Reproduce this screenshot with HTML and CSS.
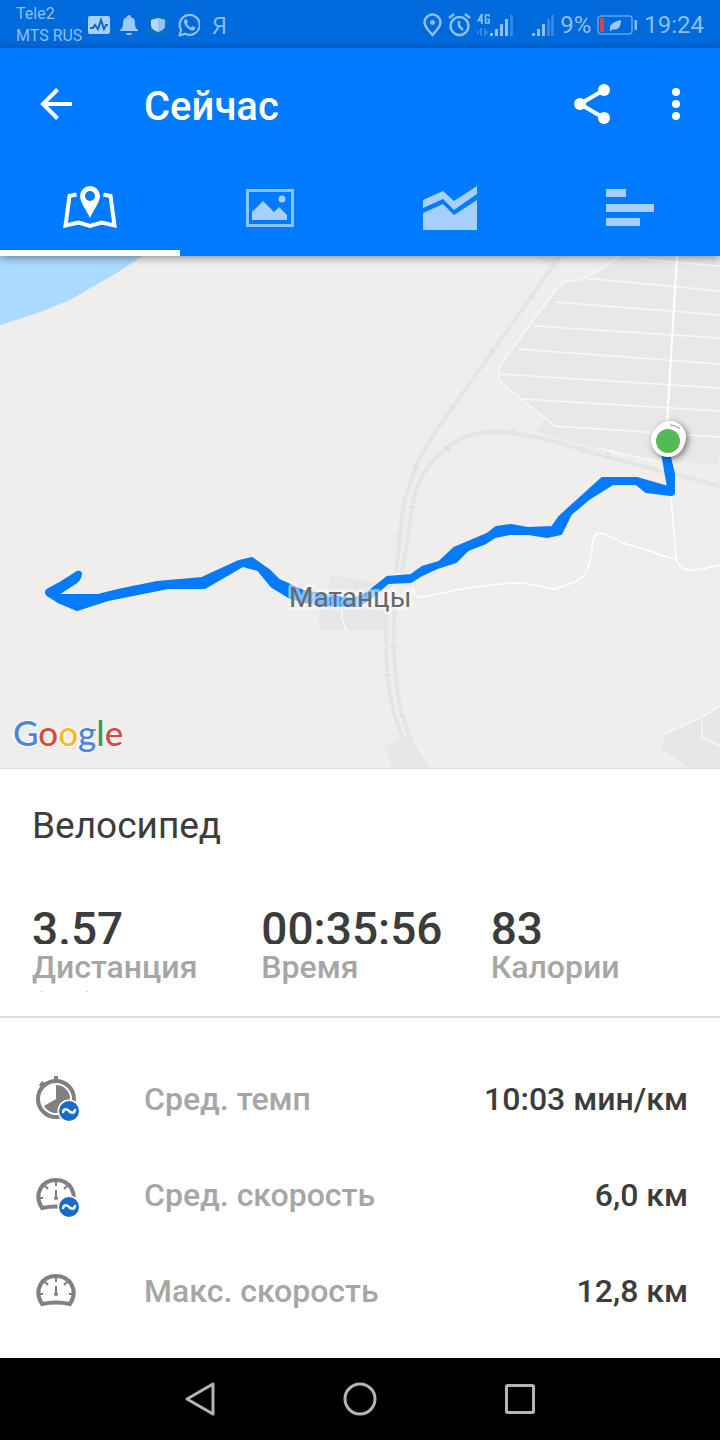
FILE: index.html
```html
<!DOCTYPE html>
<html lang="ru">
<head>
<meta charset="utf-8">
<meta name="viewport" content="width=device-width, initial-scale=1">
<title>Сейчас</title>
<link rel="stylesheet" href="styles.css">
</head>
<body>
<div class="status">
  <div class="status-group status-left">
    <div class="carriers"><span>Tele2</span><span>MTS RUS</span></div>
    <svg width="22" height="18" viewBox="0 0 22 18"><rect width="22" height="18" rx="2" fill="#a9d0f7"/><path d="M2 12h3l2-3 3 4 3-9 3 9 2-4h2" fill="none" stroke="#0a69d6" stroke-width="2"/></svg>
    <svg width="18" height="20" viewBox="0 0 18 20" fill="#9ccbf9"><path d="M9 0a2 2 0 0 1 2 2c3 1 4 3 4 6 0 4 1 6 3 7v1H0v-1c2-1 3-3 3-7 0-3 1-5 4-6a2 2 0 0 1 2-2zM6 18h6a3 2 0 0 1-6 0z"/></svg>
    <svg width="20" height="20" viewBox="0 0 20 20"><rect width="20" height="20" rx="3" fill="#0870c0"/><path d="M10 3l7 2v5c0 4-3 5-7 7-4-2-7-3-7-7V5z" fill="#b4d9fa"/><path d="M10 3l7 2v5c0 4-3 5-7 7z" fill="#94c6f5"/></svg>
    <svg width="22" height="24" viewBox="0 0 22 24"><path d="M1.500 22.500l1.600-5.500A10 10 0 1 1 7 20.700z" fill="none" stroke="#8dc0f5" stroke-width="2.200" stroke-linejoin="round"/><path d="M7 6.500l1.500-.5 1.500 3-1 1.500c1 2 2 3 4 4l1.500-1.500 3 1.500c0 2-1.500 3-3 3-4-.5-8.500-5-8.500-9 0-1 .4-1.600 1-2z" fill="#8dc0f5"/></svg>
    <span class="ya">Я</span>
  </div>
  <div class="status-group status-right">
    <svg width="19" height="24" viewBox="0 0 19 24"><path d="M9.500 22C5 17 1.500 13.500 1.500 9.500a8 8 0 0 1 16 0c0 4-3.500 7.500-8 12.500z" fill="none" stroke="#8dc0f5" stroke-width="2.500"/><circle cx="9.500" cy="9.500" r="2.500" fill="#8dc0f5"/></svg>
    <svg width="23" height="24" viewBox="0 0 23 24" fill="none" stroke="#8dc0f5" stroke-width="2.500"><circle cx="11.500" cy="13" r="9"/><path d="M11 8v5l4 4M1 5l5-4M22 5l-5-4"/></svg>
    <svg width="36" height="24" viewBox="0 0 36 24" fill="#8dc0f5"><path d="M5 1L1.500 7.500H6M4.700 1v10M12 3.500V2H8.500v8H12V6.500h-2" fill="none" stroke="#8dc0f5" stroke-width="1.700"/><path d="M13 20h3v3h-3zM18 16h3v7h-3zM23 11h3v12h-3zM28 6h3v17h-3z"/><path d="M33 2h3v21h-3zM0 18h2v3H0zM3 15h2v8H3zM7 15h2v8H7zM9 18h2v3H9z" opacity=".35"/></svg>
    <svg width="35" height="24" viewBox="0 0 35 24" fill="#8dc0f5"><path d="M13 20h3v3h-3zM18 16h3v7h-3zM23 11h3v12h-3z"/><path d="M28 6h3v17h-3zM32 2h3v21h-3z" opacity=".35"/></svg>
    <span>9%</span>
    <svg width="41" height="20" viewBox="0 0 41 20"><rect x="1" y="1" width="34" height="18" rx="3" fill="none" stroke="#5da5ef" stroke-width="1.500"/><path d="M3 3h4v14H3z" fill="#d8453f"/><path d="M13 16c-1-7 3-9 11-11 0 7-3 11-9 9l5-5-6 7z" fill="#9ccbf9"/><path d="M37.500 5H39a1 1 0 0 1 1 1v8a1 1 0 0 1-1 1h-1.500z" fill="#8dc0f5"/></svg>
    <time>19:24</time>
  </div>
</div>

<header class="header">
  <div class="appbar">
    <button class="icon-button" aria-label="Назад"><svg width="32" height="32" viewBox="0 0 32 32" fill="none" stroke="#fff" stroke-width="4"><path d="M32 16H3M17.500 1.500L3 16l14.500 14.500"/></svg></button>
    <h1>Сейчас</h1>
    <button class="icon-button" aria-label="Поделиться"><svg width="36" height="40" viewBox="0 0 36 40" fill="#fff"><path d="M30 6L6 20l24 14" fill="none" stroke="#fff" stroke-width="4"/><circle cx="30" cy="6" r="6"/><circle cx="6" cy="20" r="6"/><circle cx="30" cy="34" r="6"/></svg></button>
    <button class="icon-button" aria-label="Ещё"><svg width="8" height="32" viewBox="0 0 8 32" fill="#fff"><circle cx="4" cy="4" r="4"/><circle cx="4" cy="16" r="4"/><circle cx="4" cy="28" r="4"/></svg></button>
  </div>
  <nav class="tabs">
    <button class="tab tab-active" aria-label="Карта"><svg width="54" height="48" viewBox="0 0 54 48"><path d="M13.500 10.500L6.500 12 2.500 41.500l13-3L27 42l11.500-3.500 13 3L47.500 12l-7-1.500" fill="none" stroke="#fff" stroke-width="4"/><path d="M27 2a10 10 0 0 1 10 10c0 6-7 15-10 22-3-7-10-16-10-22A10 10 0 0 1 27 2zm0 5a5 5 0 1 0 0 10 5 5 0 0 0 0-10z" fill="#fff" fill-rule="evenodd"/></svg></button>
    <button class="tab" aria-label="Фото"><svg width="48" height="48" viewBox="0 0 48 48"><rect x="1.500" y="6.500" width="45" height="35" fill="none" stroke="#8cc3ff" stroke-width="3"/><path d="M6 36v-8l11-11 11 11 5-5 8 8v5z" fill="#a6d0fb"/><circle cx="36" cy="15" r="3.500" fill="#a6d0fb"/></svg></button>
    <button class="tab" aria-label="Графики"><svg width="54" height="48" viewBox="0 0 54 48" fill="#a6d0fb"><path d="M0 16L20 7l11 10L54 2v8L31 26 20 15 0 24z"/><path d="M0 29l20-9 11 11 23-15v30H0z"/></svg></button>
    <button class="tab" aria-label="Отрезки"><svg width="48" height="48" viewBox="0 0 48 48" fill="#a6d0fb"><path d="M0 5h20v8H0zM0 20h48v8H0zM0 34h34v8H0z"/></svg></button>
  </nav>
</header>

<main>
  <section class="map" aria-label="Маршрут">
    <svg class="map-canvas" viewBox="0 0 720 512" preserveAspectRatio="xMidYMid slice">
      <rect width="720" height="512" fill="#efeeec"/>
      <path d="M0 0h142L120 15 70 44 35 58 0 69z" fill="#aadaff"/>
      <path d="M620 0L600 14 580 24 566 25 555 35 499 111V125L546 162 536 176 603 195 716 210 720 192V0z" fill="#e8e8e8"/>
      <path d="M536 0h26l-10 12zM330 319l62 10-6 45h-67v-25h8zM386 490l22-10 22 32h-38zM665 478l39-18 16-10v62h-30l-29-19z" fill="#e7e7e8"/>
      <g fill="none" stroke="#f8f8f8" stroke-width="1.500">
        <path d="M620 0L600 14l-20 10-14 1-11 10-56 76v14l56 45M583 22l137 13M555 46l165 13M535 70l185 12M518 93l202 15M500 118l220 14M522 143l198 12M555 170l165 11M640 3l80 7M597 192l80 18"/>
        <path d="M665 478l39-18 16-10M702 463v18l18 9"/>
        <path d="M342 350q-2 14 5 25"/>
      </g>
      <g fill="none" stroke="#e4e5e5" stroke-width="4">
        <path d="M560 0L458 144C442 166 424 190 416 211c-6 14-11 28-14 50l-6 56"/>
        <path d="M720 230L603 200C545 182 510 174 485 176c-16 1-28 8-38 16-12 9-21 19-27 32-8 18-10 42-13 64l-5 29"/>
        <path d="M387 340c-2 52-1 72 3 100 6 30 16 52 28 72M395 340c-2 52-1 72 3 100 6 30 14 52 28 72"/>
      </g>
      <path d="M530 39l5 4M490 93l5 4M449 148l5 4M413 210l6 2M514 173v7M445 190l5 6M582 190v7M608 196v8M409 251h6M396 280h6M390 390h7M384 419h6M399 460h6" stroke="#dcdedf" stroke-width="2"/>
      <path d="M677 0l-10 168" fill="none" stroke="#fff" stroke-width="2"/>
      <path d="M671 241l5 61c3 8 5 12 16 12 10 0 17-3 28-5M676 302h-7l-16-6-30-9c-12-6-18-11-26-9-7 3-4 33-13 41-7 9-18 9-29 14-14-1-22-7-42-6-25 2-61 7-84 13-14 4-16-2-16-9" fill="none" stroke="#fff" stroke-width="1.500"/>
      <path fill="#047bff" stroke="#047bff" stroke-width="2" stroke-linejoin="round" d="M662 197L668 231 637 222H602L559 261 552 271 528 272 511 269 496 271 487 278 454 292 439 306 422 311 411 319 387 321 367 337 353 343 303 335 288 328 279 324 269 314 252 302 239 305 202 322 157 326 118 334 98 339H57L74 328Q81 324 81 317Q80 315 77 316L58 328 47 334Q45 336 47 339L58 346 77 354 108 344 168 332H205L243 310 258 314 272 331 290 342 317 349 358 350 370 343 388 327 411 326 422 319 437 312 456 306 468 294 486 287 495 281 510 278 528 278 547 281 561 278 571 258 589 243 613 228H636L646 236 671 239Q674 239 674 236V218L669 197z"/>
      <text class="place" x="289" y="351">Матанцы</text>
      <g class="pin">
        <circle cx="670" cy="181" r="16" fill="#fff"/>
        <circle cx="668" cy="184" r="17" fill="#fff"/>
      </g>
      <path d="M670 169q6 0 10 4" fill="none" stroke="#d9796c"/>
      <circle cx="668" cy="185" r="12" fill="#55b956"/>
    </svg>
    <div class="google"><span class="g-blue">G</span><span class="g-red">o</span><span class="g-yellow">o</span><span class="g-blue">g</span><span class="g-green">l</span><span class="g-red">e</span></div>
  </section>

  <section class="summary">
    <h2>Велосипед</h2>
    <dl class="totals">
      <div><dt>Дистанция (км)</dt><dd>3.57</dd></div>
      <div><dt>Время</dt><dd>00:35:56</dd></div>
      <div><dt>Калории</dt><dd>83</dd></div>
    </dl>
  </section>

  <dl class="details">
    <div class="row">
      <svg width="48" height="60" viewBox="0 0 48 60"><circle cx="24" cy="30" r="18" fill="none" stroke="#808080" stroke-width="4"/><path d="M22 7h4v5h-4zM7 16l3-4 4 3-4 4z" fill="#808080"/><path d="M24 30V16a14 14 0 1 1-12 21z" fill="#808080"/><circle cx="37" cy="42" r="11.500" fill="#fff"/><circle cx="37" cy="42" r="10" fill="#156dc9"/><path d="M31 43c1-4 4-3 6-1s5 3 6-1" fill="none" stroke="#fff" stroke-width="2.500" stroke-linecap="round"/></svg>
      <dt>Сред. темп</dt><dd>10:03 мин/км</dd>
    </div>
    <div class="row">
      <svg width="48" height="60" viewBox="0 0 48 60"><g fill="none" stroke="#808080"><path d="M10 43C1 29 10 15 24 15s23 14 14 28q-14-3-28 0z" stroke-width="4"/><path d="M24 17v4M13 21l3 3M35 21l-3 3M7 33h4M41 33h-4M24 25v8" stroke-width="2"/></g><circle cx="24" cy="33" r="2" fill="#808080"/><circle cx="37" cy="42" r="11.500" fill="#fff"/><circle cx="37" cy="42" r="10" fill="#156dc9"/><path d="M31 43c1-4 4-3 6-1s5 3 6-1" fill="none" stroke="#fff" stroke-width="2.500" stroke-linecap="round"/></svg>
      <dt>Сред. скорость</dt><dd>6,0 км</dd>
    </div>
    <div class="row">
      <svg width="48" height="60" viewBox="0 0 48 60"><g fill="none" stroke="#808080"><path d="M10 43C1 29 10 15 24 15s23 14 14 28q-14-3-28 0z" stroke-width="4"/><path d="M24 17v4M13 21l3 3M35 21l-3 3M7 33h4M41 33h-4M24 25v8" stroke-width="2"/></g><circle cx="24" cy="33" r="2" fill="#808080"/></svg>
      <dt>Макс. скорость</dt><dd>12,8 км</dd>
    </div>
  </dl>
</main>

<nav class="system-nav">
  <button aria-label="Назад"><svg width="32" height="36" viewBox="0 0 32 36"><path d="M29 3v30L3 18z"/></svg></button>
  <button aria-label="Домой"><svg width="34" height="36" viewBox="0 0 34 36"><circle cx="17" cy="18" r="15"/></svg></button>
  <button aria-label="Недавние"><svg width="32" height="36" viewBox="0 0 32 36"><rect x="2.500" y="4.500" width="27" height="27" rx="1"/></svg></button>
</nav>
</body>
</html>
```
FILE: styles.css
```css
* {
  box-sizing: border-box;
}

body {
  margin: 0;
  min-height: 100vh;
  display: flex;
  flex-direction: column;
  background: #fff;
  color: #3c3c3c;
  font-family: Roboto, "Noto Sans", sans-serif;
}

button {
  display: flex;
  align-items: center;
  justify-content: center;
  padding: 0;
  border: 0;
  background: none;
  cursor: pointer;
}

svg {
  display: block;
  flex: none;
}

h1, h2, dl, dt, dd {
  margin: 0;
}

.status {
  display: flex;
  justify-content: space-between;
  align-items: center;
  height: 48px;
  padding: 1px 16px 0;
  background: #0069db;
  color: #8dc0f5;
  font-size: 24px;
}

.status-group {
  display: flex;
  align-items: center;
}

.status-left {
  gap: 10px;
}

.status-right {
  gap: 6px;
}

.carriers {
  display: flex;
  flex-direction: column;
  width: 62px;
  white-space: nowrap;
  font-size: 16px;
  line-height: 22px;
}

.ya {
  padding-left: 2px;
  font-family: "Open Sans", "Noto Sans", sans-serif;
  line-height: 28px;
}

.header {
  position: relative;
  z-index: 1;
  background: #007aff;
  box-shadow: 0 2px 8px rgba(0, 0, 0, 0.4);
}

.appbar {
  display: flex;
  align-items: center;
  height: 112px;
  padding: 0 0 0 16px;
}

.appbar h1 {
  flex: 1;
  padding: 5px 0 0 48px;
  color: #fff;
  font-size: 40px;
  font-weight: 500;
  line-height: 48px;
}

.icon-button {
  width: 80px;
  height: 80px;
}

.icon-button + .icon-button {
  width: 88px;
}

.tabs {
  display: grid;
  grid-template-columns: repeat(4, 1fr);
}

.tab {
  height: 96px;
  border-bottom: 6px solid transparent;
  padding-top: 6px;
}

.tab-active {
  border-color: #fff;
}

.map {
  position: relative;
  box-shadow: 0 1px 1px #dedede;
}

.map-canvas {
  width: 100%;
  height: auto;
  aspect-ratio: 720 / 512;
}

.place {
  fill: #646a70;
  stroke: rgba(255, 255, 255, 0.5);
  stroke-width: 6px;
  stroke-linejoin: round;
  paint-order: stroke;
  font-size: 28px;
}

.pin {
  filter: drop-shadow(2px 2px 3px rgba(0, 0, 0, 0.5));
}

.google {
  position: absolute;
  left: 13px;
  bottom: 14px;
  font-family: Lato, sans-serif;
  font-size: 35px;
  font-weight: 500;
  line-height: 44px;
  text-shadow: 0 0 3px #fff, 0 0 3px #fff;
}

.g-blue {
  color: #4a85e0;
}

.g-red {
  color: #d84a3e;
}

.g-yellow {
  color: #f2bc27;
}

.g-green {
  color: #3c9d56;
}

.summary {
  padding: 33px 0 24px 32px;
  border-bottom: 2px solid #dedede;
}

.summary h2 {
  font-size: 37px;
  font-weight: 400;
  line-height: 50px;
}

.totals {
  display: grid;
  grid-template-columns: repeat(3, 1fr);
  padding-top: 57px;
}

.totals > div {
  display: flex;
  flex-direction: column-reverse;
}

.totals dd {
  height: 36px;
  overflow: hidden;
  font-size: 46px;
  font-weight: 500;
  line-height: 42px;
}

.totals dt {
  width: 180px;
  height: 48px;
  overflow: hidden;
  padding-top: 4px;
  color: #a6a6a6;
  font-size: 32px;
  font-weight: 500;
  line-height: 38px;
}

.details {
  padding: 33px 32px 19px;
  font-size: 32px;
  font-weight: 500;
}

.row {
  display: flex;
  align-items: center;
  height: 96px;
}

.row dt {
  flex: 1;
  padding-left: 64px;
  color: #a6a6a6;
}

.system-nav {
  display: flex;
  justify-content: center;
  align-items: center;
  height: 82px;
  margin-top: auto;
  background: #000;
}

.system-nav button {
  width: 160px;
  height: 80px;
}

.system-nav svg {
  fill: none;
  stroke: #b4b4b4;
  stroke-width: 3px;
  stroke-linejoin: round;
}
```
